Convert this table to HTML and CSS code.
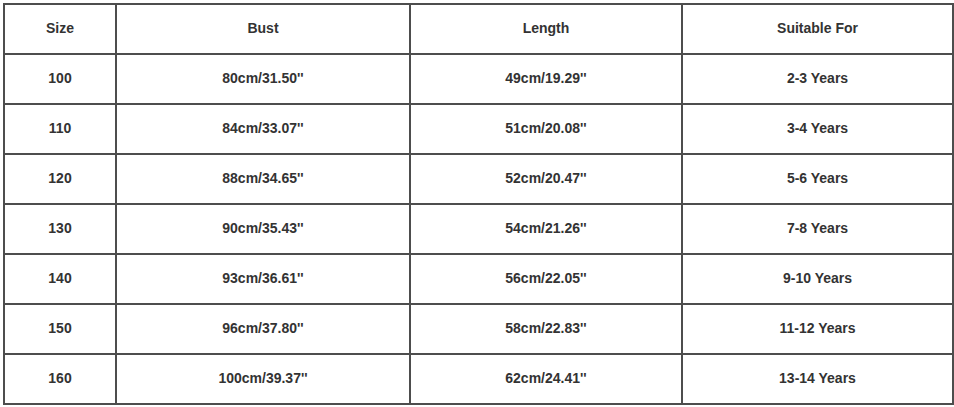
FILE: index.html
```html
<!DOCTYPE html>
<html>
<head>
<meta charset="utf-8">
<link rel="stylesheet" href="styles.css">
</head>
<body>
<table class="size-table">
  <colgroup>
    <col class="c1"><col class="c2"><col class="c3"><col class="c4">
  </colgroup>
  <tr><th>Size</th><th>Bust</th><th>Length</th><th>Suitable For</th></tr>
  <tr><td>100</td><td>80cm/31.50''</td><td>49cm/19.29''</td><td>2-3 Years</td></tr>
  <tr><td>110</td><td>84cm/33.07''</td><td>51cm/20.08''</td><td>3-4 Years</td></tr>
  <tr><td>120</td><td>88cm/34.65''</td><td>52cm/20.47''</td><td>5-6 Years</td></tr>
  <tr><td>130</td><td>90cm/35.43''</td><td>54cm/21.26''</td><td>7-8 Years</td></tr>
  <tr><td>140</td><td>93cm/36.61''</td><td>56cm/22.05''</td><td>9-10 Years</td></tr>
  <tr><td>150</td><td>96cm/37.80''</td><td>58cm/22.83''</td><td>11-12 Years</td></tr>
  <tr><td>160</td><td>100cm/39.37''</td><td>62cm/24.41''</td><td>13-14 Years</td></tr>
</table>
</body>
</html>
```
FILE: styles.css
```css
html, body {
  margin: 0;
  padding: 0;
  background: #ffffff;
}
body {
  padding: 3px 0 0 3px;
  font-family: "Liberation Sans", Arial, sans-serif;
}
.size-table {
  border-collapse: collapse;
  table-layout: fixed;
  width: 949px;
}
.c1 { width: 112px; }
.c2 { width: 294px; }
.c3 { width: 272px; }
.c4 { width: 271px; }
.size-table th,
.size-table td {
  border: 2px solid #4d4d4d;
  height: 46px;
  padding: 0 0 2px 0;
  text-align: center;
  vertical-align: middle;
  font-size: 14px;
  font-weight: bold;
  color: #333333;
}
```
